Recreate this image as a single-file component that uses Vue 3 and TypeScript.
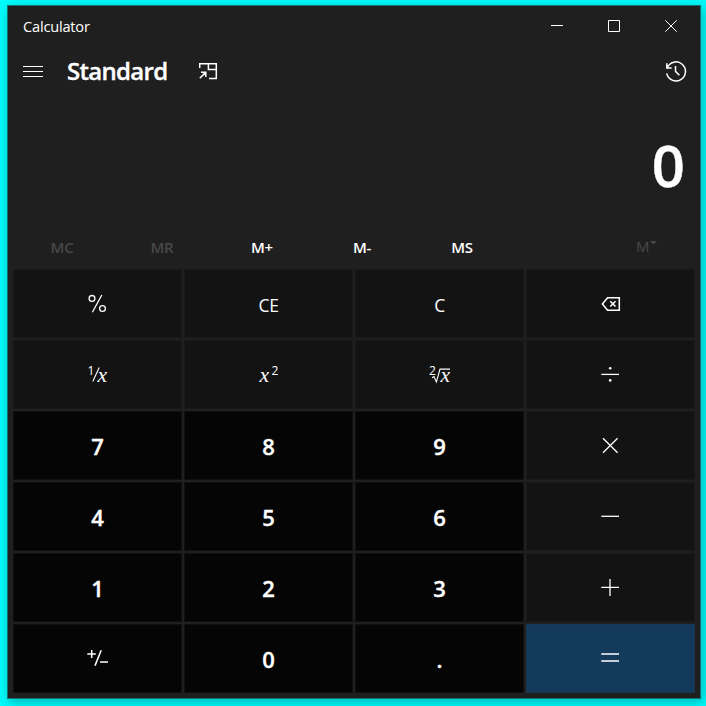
<script setup lang="ts">
type Kind = 'fn' | 'num' | 'eq'
interface Key {
  id: string
  kind: Kind
  label?: string
}

const memory = [
  { label: 'MC', disabled: true },
  { label: 'MR', disabled: true },
  { label: 'M+', disabled: false },
  { label: 'M-', disabled: false },
  { label: 'MS', disabled: false },
]

const keys: Key[] = [
  { id: 'percent', kind: 'fn' },
  { id: 'ce', kind: 'fn', label: 'CE' },
  { id: 'c', kind: 'fn', label: 'C' },
  { id: 'back', kind: 'fn' },
  { id: 'inv', kind: 'fn' },
  { id: 'sqr', kind: 'fn' },
  { id: 'root', kind: 'fn' },
  { id: 'div', kind: 'fn' },
  { id: '7', kind: 'num', label: '7' },
  { id: '8', kind: 'num', label: '8' },
  { id: '9', kind: 'num', label: '9' },
  { id: 'mul', kind: 'fn' },
  { id: '4', kind: 'num', label: '4' },
  { id: '5', kind: 'num', label: '5' },
  { id: '6', kind: 'num', label: '6' },
  { id: 'sub', kind: 'fn' },
  { id: '1', kind: 'num', label: '1' },
  { id: '2', kind: 'num', label: '2' },
  { id: '3', kind: 'num', label: '3' },
  { id: 'add', kind: 'fn' },
  { id: 'neg', kind: 'num' },
  { id: '0', kind: 'num', label: '0' },
  { id: 'dot', kind: 'num', label: '.' },
  { id: 'eq', kind: 'eq' },
]
</script>

<template>
  <div class="desktop">
    <main class="window">
      <header class="titlebar">
        <span class="title">Calculator</span>
        <div class="controls">
          <svg class="ctl" viewBox="0 0 12 12"><path d="M0 5.5H12" /></svg>
          <svg class="ctl" viewBox="0 0 12 12"><path d="M.5 .5H11.5V11.5H.5Z" /></svg>
          <svg class="ctl" viewBox="0 0 12 12"><path d="M.3 .3L11.7 11.7M11.7 .3L.3 11.7" /></svg>
        </div>
      </header>

      <nav class="mode">
        <svg class="burger" viewBox="0 0 20 11"><path d="M0 .5H20M0 5.5H20M0 10.5H20" /></svg>
        <h1 class="name">Standard</h1>
        <svg class="compact" viewBox="0 0 20 18">
          <path d="M1.7 6V1.7H18.3V16.4H11M10.4 1.7V7.4H18.3M1.8 16.2L7.6 10.4M3 10.2H7.8V15" />
        </svg>
        <svg class="history" viewBox="0 0 22 22">
          <path d="M1.7 13.4A9.5 9.5 0 1 0 2.2 7.8M1.8 3.2V8H6.6M10.5 6V11.4L14.4 15.3" />
        </svg>
      </nav>

      <output class="display">0</output>

      <div class="memory">
        <span v-for="m in memory" :key="m.label" class="mem" :class="{ off: m.disabled }">{{ m.label }}</span>
        <span class="mem-list">M<svg viewBox="0 0 7 4"><path d="M0 0H7L3.5 3.4Z" /></svg></span>
      </div>

      <section class="pad">
        <div v-for="k in keys" :key="k.id" class="key" :class="k.kind">
          <span v-if="k.label" class="label">{{ k.label }}</span>
          <svg v-else class="icon" viewBox="0 0 25 25">
            <g v-if="k.id === 'percent'">
              <circle class="ring" cx="7" cy="7.4" r="2.9" />
              <circle class="ring" cx="17.5" cy="17.5" r="2.9" />
              <path d="M7.4 21.2L16.8 4" />
            </g>
            <path v-else-if="k.id === 'back'" class="bold" d="M9.6 6.8H21.3V19.2H9.6L4.4 13ZM12.3 10.3L17.5 15.5M17.5 10.3L12.3 15.5" />
            <g v-else-if="k.id === 'inv'">
              <text class="sup" x="2.6" y="13">1</text>
              <path class="thin" d="M7.8 19.6L14.2 5.6" />
              <text class="var" x="12.4" y="19.7" textLength="9.6" lengthAdjust="spacingAndGlyphs">x</text>
            </g>
            <g v-else-if="k.id === 'sqr'">
              <text class="var" x="3.6" y="19.7" textLength="9.6" lengthAdjust="spacingAndGlyphs">x</text>
              <text class="sup" x="15.6" y="13">2</text>
            </g>
            <g v-else-if="k.id === 'root'">
              <text class="sup" x="2" y="13">2</text>
              <path class="thin" d="M5 15.8L7 14.6L9.4 20L13 7.1H23" />
              <text class="var" x="13.6" y="19.7" textLength="9.6" lengthAdjust="spacingAndGlyphs">x</text>
            </g>
            <g v-else-if="k.id === 'div'">
              <path d="M3.3 12.4H21" />
              <circle cx="12.2" cy="6.3" r="1.3" />
              <circle cx="12.2" cy="18.4" r="1.3" />
            </g>
            <path v-else-if="k.id === 'mul'" d="M5 5.2L19.6 19.8M19.6 5.2L5 19.8" />
            <path v-else-if="k.id === 'sub'" d="M3.3 12.3H21" />
            <path v-else-if="k.id === 'add'" d="M3.3 12.3H21M12 4V21" />
            <path v-else-if="k.id === 'neg'" class="bold" d="M2.3 7.9H10.8M6.7 4V12M10 19.6L16.2 4.2M15 15.9H23" />
            <path v-else class="bold" d="M3.3 8H21M3.3 15H21" />
          </svg>
        </div>
      </section>
    </main>
  </div>
</template>

<style>
body {
  margin: 0;
  background: #00f7f7;
}
</style>

<style scoped>
.desktop {
  box-sizing: border-box;
  width: 706px;
  height: 706px;
  padding: 5px 5px 7px 7px;
  overflow: hidden;
  background: #00fafa;
  font-family: 'Open Sans', 'Noto Sans', sans-serif;
  color: #fff;
}
.window {
  box-sizing: border-box;
  width: 694px;
  height: 694px;
  border: 1px solid #0f7474;
  background: #1f1f1f;
  box-shadow: 2px 3px 10px rgba(0, 0, 0, 0.28);
}
svg {
  display: block;
  fill: none;
  stroke: #fff;
}
.titlebar {
  display: flex;
  justify-content: space-between;
  height: 40px;
  padding: 0 23px 0 15px;
}
.title {
  font-size: 14.6px;
  line-height: 40px;
  letter-spacing: -0.2px;
}
.controls {
  display: flex;
  gap: 45px;
  padding-top: 14px;
}
.ctl {
  width: 12px;
  height: 12px;
}
.mode {
  display: flex;
  align-items: center;
  height: 50px;
  padding: 0 13px 0 15px;
}
.burger {
  width: 20px;
  height: 11px;
}
.name {
  width: 130px;
  margin: 0 0 0 24px;
  font-size: 24px;
  font-weight: 600;
  line-height: 50px;
  letter-spacing: -0.7px;
  -webkit-text-stroke: 0.35px #fff;
}
.compact {
  width: 20px;
  height: 18px;
  margin-left: 1px;
  stroke-width: 1.5;
}
.history {
  width: 22px;
  height: 22px;
  margin-left: auto;
  stroke-width: 1.5;
}
.display {
  display: block;
  height: 130px;
  padding-right: 15px;
  font-size: 58px;
  font-weight: 600;
  line-height: 138px;
  text-align: right;
  -webkit-text-stroke: 0.4px #fff;
}
.memory {
  display: flex;
  height: 43px;
  padding-left: 4px;
  line-height: 43px;
}
.mem {
  width: 100px;
  font-size: 15px;
  font-weight: 600;
  letter-spacing: -0.2px;
  text-align: center;
}
.mem.off {
  color: #484848;
}
.mem-list {
  display: flex;
  margin-left: 124px;
  font-size: 15px;
  line-height: 41px;
  color: #484848;
}
.mem-list svg {
  width: 7px;
  height: 4px;
  margin-top: 15px;
  fill: #484848;
  stroke: none;
}
.pad {
  display: grid;
  grid-template-columns: repeat(4, 169px);
  grid-template-rows: repeat(6, 69px);
  gap: 2px;
  padding-left: 5px;
}
.key {
  box-sizing: border-box;
  display: flex;
  justify-content: center;
  border: 1px solid #191919;
  background: #131313;
}
.key.num {
  border-color: #101010;
  background: #050505;
}
.key.eq {
  border-color: #193751;
  background: #133a5a;
}
.label {
  font-size: 17.5px;
  line-height: 70px;
  letter-spacing: -0.4px;
}
.num .label {
  font-size: 22px;
  font-weight: 600;
  line-height: 69px;
  letter-spacing: 0;
  -webkit-text-stroke: 0.35px #fff;
}
.icon {
  width: 25px;
  height: 25px;
  margin-top: 21px;
  overflow: visible;
  stroke-width: 1.3;
}
.icon circle {
  fill: #fff;
  stroke: none;
}
.icon .ring {
  fill: none;
  stroke: #fff;
}
.icon .thin {
  stroke-width: 1.1;
}
.icon .bold {
  stroke-width: 1.55;
}
.icon text {
  fill: #fff;
  stroke: none;
}
.sup {
  font-size: 12px;
}
.var {
  font-family: 'Liberation Serif', serif;
  font-size: 20px;
  font-style: italic;
}
</style>
